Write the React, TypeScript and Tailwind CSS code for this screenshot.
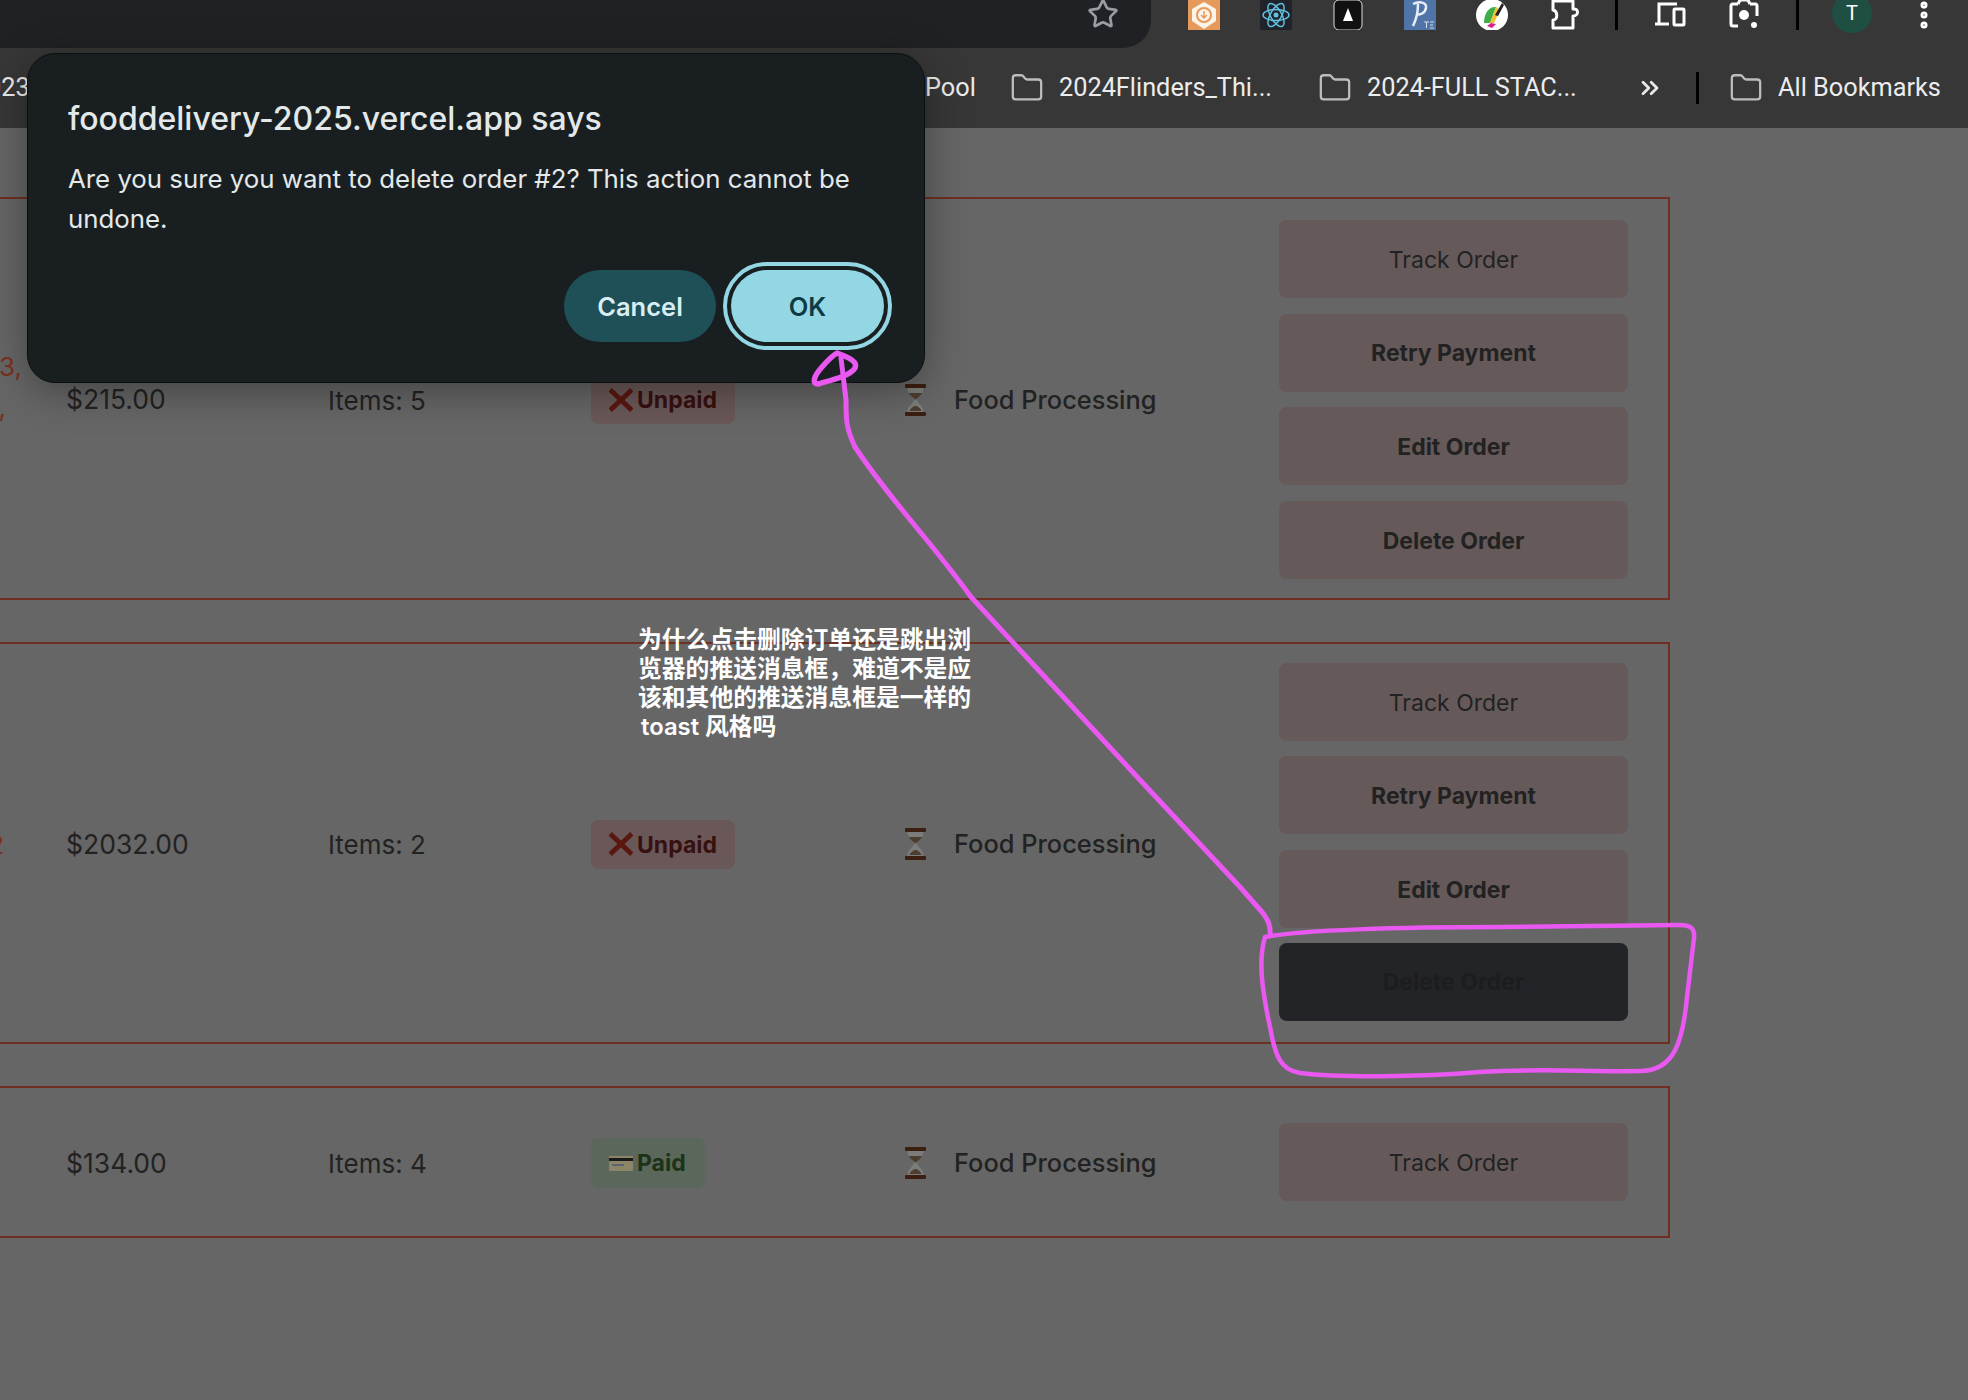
import { Star, EllipsisVertical, ChevronsRight, Folder } from "lucide-react";

function Hourglass() {
  return (
    <svg width="21" height="32" viewBox="0 0 21 32" className="shrink-0">
      <path d="M2.500 4h16c0 6-6 9-6.500 12 .5 3 6.500 6 6.500 12h-16c0-6 6-9 6.500-12-.5-3-6.500-6-6.500-12z" fill="#7c7c7a" />
      <path d="M4 9h13c-1 3-5 5-6.500 7C9 14 5 12 4 9z" fill="#4d3f30" />
      <path d="M4.500 27c1-3 4.500-5 6-5s5 2 6 5z" fill="#4d3f30" />
      <rect x="0" y="0" width="21" height="4" rx="1" fill="#3b1f10" />
      <rect x="0" y="28" width="21" height="4" rx="1" fill="#3b1f10" />
    </svg>
  );
}

function RedX() {
  return (
    <svg width="24" height="24" viewBox="0 0 24 24" className="shrink-0">
      <path d="M3 3.500 12 12m0 0 9-8.500M12 12l-9 8.500M12 12l9 8.500" stroke="#5a1710" strokeWidth="5" strokeLinecap="square" fill="none" />
    </svg>
  );
}

function CardIcon() {
  return (
    <svg width="24" height="15" viewBox="0 0 24 15" className="shrink-0">
      <rect width="24" height="15" rx="1" fill="#8a8667" />
      <rect y="2" width="24" height="3" fill="#1a1a1a" />
      <rect x="3" y="8" width="12" height="2" fill="#5e6373" />
    </svg>
  );
}

function Cell({ children }: { children?: React.ReactNode }) {
  return <div className="flex items-center">{children}</div>;
}

const btnBase =
  "flex h-[78px] w-[349px] items-center justify-center rounded-lg bg-[#655a59] pt-[2px] text-[23px] text-[#222222]";

function Buttons({ darkDelete, only }: { darkDelete?: boolean; only?: boolean }) {
  return (
    <div
      className={
        only
          ? "flex flex-col"
          : darkDelete
            ? "mb-[2px] flex flex-col gap-[15.5px]"
            : "mt-[2px] flex flex-col gap-[15.7px]"
      }
    >
      <div className={btnBase}>Track Order</div>
      {!only && (
        <>
          <div className={btnBase + " font-bold"}>Retry Payment</div>
          <div className={btnBase + " font-bold"}>Edit Order</div>
          <div
            className={
              darkDelete
                ? "flex h-[78px] w-[349px] items-center justify-center rounded-lg bg-[#232428] text-[23px] font-bold text-[#1c1d1f]"
                : btnBase + " font-bold"
            }
          >
            Delete Order
          </div>
        </>
      )}
    </div>
  );
}

function Row({
  id,
  amount,
  items,
  paid,
  h,
  children,
}: {
  id: React.ReactNode;
  amount: string;
  items: string;
  paid?: boolean;
  h: string;
  children: React.ReactNode;
}) {
  return (
    <div
      className={
        "grid w-[1670px] grid-cols-[66px_262px_263px_314px_374px_349px_42px] items-center border-2 border-l-0 border-[#6f2f20] text-[#222222] " +
        h
      }
    >
      <div className="flex justify-end pr-[44px] text-[26px] text-[#7a3020]">{id}</div>
      <div className="pt-[3px] text-[26.500px]">{amount}</div>
      <div className="pt-[3px] text-[26px]">{items}</div>
      <Cell>
        {paid ? (
          <div className="mt-[2px] flex h-[50px] w-[114px] items-center gap-[4px] rounded-lg bg-[#5a675a] pl-[18px] text-[23px] font-bold text-[#1c3318]">
            <CardIcon />
            <span className="pt-[1px]">Paid</span>
          </div>
        ) : (
          <div className="mt-[2px] flex h-[49px] w-[144px] items-center gap-[4px] rounded-lg bg-[#6a5858] pl-[18px] text-[23px] font-bold text-[#371010]">
            <RedX />
            <span className="pt-[2px]">Unpaid</span>
          </div>
        )}
      </Cell>
      <div className="flex items-center gap-[28px] pt-[3px] text-[25.400px] font-medium">
        <Hourglass />
        Food Processing
      </div>
      {children}
      <div />
    </div>
  );
}

function FolderItem({ label }: { label: string }) {
  return (
    <div className="flex items-center gap-[15px] whitespace-nowrap">
      <Folder size={34} strokeWidth={1.6} className="shrink-0 text-[#bdbdbd]" />
      <span>{label}</span>
    </div>
  );
}

export default function App() {
  return (
    <div className="relative h-[1400px] w-[1968px] overflow-hidden bg-[#666666] font-['Inter',sans-serif]">
      {/* Browser chrome */}
      <div className="h-[128px] bg-[#373737] font-['Roboto',sans-serif]">
        <div className="flex h-[48px] items-start">
          <div className="flex h-[48px] w-[1151px] items-start justify-end rounded-br-[28px] bg-[#202124] pr-[32px] pt-0">
            <Star size={32} strokeWidth={2} className="-mt-[2px] text-[#9a9da1]" />
          </div>
          <div className="ml-[37px] flex h-[36px] items-start">
            <svg width="32" height="30" viewBox="0 0 32 30">
              <rect width="32" height="30" fill="#e59a5c" />
              <path d="M16 2 28 9v12l-12 8-12-8V9z" fill="#fdf3e6" />
              <circle cx="16" cy="15" r="7" fill="none" stroke="#e59a5c" strokeWidth="2" />
              <path d="M16 11v7m-3-3 3 3 3-3" fill="none" stroke="#e59a5c" strokeWidth="1.500" />
            </svg>
            <svg width="32" height="30" viewBox="0 0 32 30" className="ml-[40px]">
              <rect width="32" height="30" rx="2" fill="#20232a" />
              <g fill="none" stroke="#61bfe0" strokeWidth="1.500">
                <ellipse cx="16" cy="15" rx="13" ry="5.500" />
                <ellipse cx="16" cy="15" rx="13" ry="5.500" transform="rotate(60 16 15)" />
                <ellipse cx="16" cy="15" rx="13" ry="5.500" transform="rotate(120 16 15)" />
              </g>
              <circle cx="16" cy="15" r="2.500" fill="#61bfe0" />
            </svg>
            <svg width="32" height="30" viewBox="0 0 32 30" className="ml-[40px]">
              <rect x="2" y="0" width="28" height="30" rx="5" fill="#111111" stroke="#dddddd" strokeWidth="1" />
              <path d="M16 8l5 13h-10z" fill="#ffffff" />
            </svg>
            <svg width="32" height="30" viewBox="0 0 32 30" className="ml-[40px]">
              <rect width="32" height="30" fill="#4f74a8" />
              <path d="M9 4c6-3 14-2 13 4s-7 7-10 6M14 4c0 8-2 16-5 22" fill="none" stroke="#e8eef7" strokeWidth="2.500" />
              <path d="M20 22h5M22.500 22v6M26 22h4M26 25h3M26 28h4" stroke="#d3deed" strokeWidth="1" fill="none" />
            </svg>
            <svg width="32" height="30" viewBox="0 0 32 30" className="ml-[40px]">
              <circle cx="16" cy="15" r="16" fill="#ffffff" />
              <path d="M8 23C8 12 14 6 20 7l-6 16z" fill="#3fae49" />
              <path d="M14 23l6-16 4 3-6 13z" fill="#f2c230" />
              <path d="M11 26l4-3 5 1-4 4z" fill="#d81e8c" />
              <path d="M19 15l7-12 2 2-6 11z" fill="#222222" />
            </svg>
            <svg width="32" height="30" viewBox="0 0 32 30" className="ml-[41px]">
              <path
                d="M4 1h20v8c6-1 6 7 0 7v12H4v-8c5 0 5-9 0-10z"
                fill="none"
                stroke="#ffffff"
                strokeWidth="3"
                strokeLinejoin="round"
              />
            </svg>
            <div className="ml-[34px] h-[30px] w-[3px] bg-black" />
            <svg width="34" height="28" viewBox="0 0 34 28" className="ml-[35px]">
              <path d="M2 24h14M6 24V4h18" fill="none" stroke="#ffffff" strokeWidth="3" />
              <rect x="21" y="9" width="10" height="16" rx="1" fill="none" stroke="#ffffff" strokeWidth="3" />
            </svg>
            <svg width="30" height="30" viewBox="0 0 30 30" className="ml-[42px]">
              <path
                d="M9 4H4a2 2 0 0 0-2 2v18a2 2 0 0 0 2 2h5M21 4h5a2 2 0 0 1 2 2v10M9 4l2-4h8l2 4"
                fill="none"
                stroke="#ffffff"
                strokeWidth="3"
              />
              <circle cx="15" cy="15" r="5" fill="#ffffff" />
              <circle cx="25" cy="25" r="3" fill="#ffffff" />
            </svg>
            <div className="ml-[37px] h-[30px] w-[3px] bg-black" />
            <div className="ml-[33px] -mt-[7px] flex h-[40px] w-[40px] items-center justify-center rounded-full bg-[#1f4f43] text-[20px] text-white">
              T
            </div>
            <EllipsisVertical size={34} strokeWidth={3} className="ml-[35px] -mt-[2px] text-white" />
          </div>
        </div>
        <div className="grid h-[80px] grid-cols-[925px_85px_308px_318px_60px_33px_auto] items-center text-[25.300px] text-[#ececec]">
          <div className="-ml-[13px]">023</div>
          <div>Pool</div>
          <FolderItem label="2024Flinders_Thi..." />
          <FolderItem label="2024-FULL STAC..." />
          <ChevronsRight size={28} strokeWidth={2.4} className="text-[#e8e8e8]" />
          <div className="h-[32px] w-[3px] bg-black" />
          <FolderItem label="All Bookmarks" />
        </div>
      </div>

      {/* Orders */}
      <div className="flex flex-col gap-[42px] pt-[69px]">
        <Row
          h="h-[403px]"
          amount="$215.00"
          items="Items: 5"
          id={
            <div className="mb-[23px] text-right leading-[41px]">
              3,
              <br />
              <span className="mr-[16px]">,</span>
            </div>
          }
        >
          <Buttons />
        </Row>
        <Row h="h-[402px]" amount="$2032.00" items="Items: 2" id={<span className="mr-[18px] pt-[3px]">2</span>}>
          <Buttons darkDelete />
        </Row>
        <Row h="h-[152px]" amount="$134.00" items="Items: 4" paid id={null}>
          <Buttons only />
        </Row>
      </div>

      {/* Alert dialog */}
      <div className="absolute left-[27px] top-[53px] flex h-[330px] w-[898px] flex-col rounded-[28px] border border-[#0c0f10] bg-[#191f20] px-[40px] pt-[45px] font-['Inter',sans-serif] shadow-[0_8px_40px_rgba(0,0,0,0.35)]">
        <div className="text-[32px] font-medium leading-[40px] text-[#e3e9ea]">fooddelivery-2025.vercel.app says</div>
        <div className="mt-[20px] text-[25.800px] leading-[40px] text-[#e3e9ea]">
          Are you sure you want to delete order #2? This action cannot be
          <br />
          undone.
        </div>
        <div className="absolute left-[536px] top-[216px] flex h-[72px] w-[152px] items-center justify-center rounded-[36px] bg-[#1f4f57] pt-[2px] text-[25.500px] font-semibold text-[#d8eef2]">
          Cancel
        </div>
        <div className="absolute left-[703px] top-[216px] flex h-[72px] w-[153px] items-center justify-center rounded-[36px] bg-[#93d7e4] pt-[2px] text-[25.500px] font-semibold text-[#0e3a44] outline-[4px] outline-offset-[4px] outline-[#93d7e4]">
          OK
        </div>
      </div>

      {/* Annotation text */}
      <div className="absolute left-[638px] top-[625px] text-[23.800px] font-semibold leading-[29px] text-white font-['Inter','Noto_Sans_CJK_SC',sans-serif]">
        为什么点击删除订单还是跳出浏
        <br />
        览器的推送消息框，难道不是应
        <br />
        该和其他的推送消息框是一样的
        <br />
        <span className="ml-[3px]">toast 风格吗</span>
      </div>

      {/* Hand-drawn marks */}
      <svg
        className="pointer-events-none absolute left-0 top-0"
        width="1968"
        height="1400"
        viewBox="0 0 1968 1400"
        fill="none"
        stroke="#ea58f2"
        strokeLinecap="round"
        strokeLinejoin="round"
      >
        <path
          strokeWidth="5"
          d="M1270 936C1271 925 1268 920 1262 912L1240 887L1140 780L971 597C930 540 890 500 855 447C846 428 846 420 846 400L841 358"
        />
        <path strokeWidth="5.500" d="M837 353C850 358 858 362 855 368C850 376 832 380 818 384C812 384 813 377 822 367C828 360 832 356 837 353Z" />
        <path
          strokeWidth="4.500"
          d="M1265 937C1300 930 1400 927 1500 927L1680 925C1692 925 1695 930 1694 938L1687 997C1683 1040 1675 1071 1640 1071C1590 1072 1540 1068 1480 1072C1420 1077 1340 1078 1300 1073C1280 1070 1275 1055 1270 1027C1262 990 1258 960 1265 937Z"
        />
      </svg>
    </div>
  );
}
